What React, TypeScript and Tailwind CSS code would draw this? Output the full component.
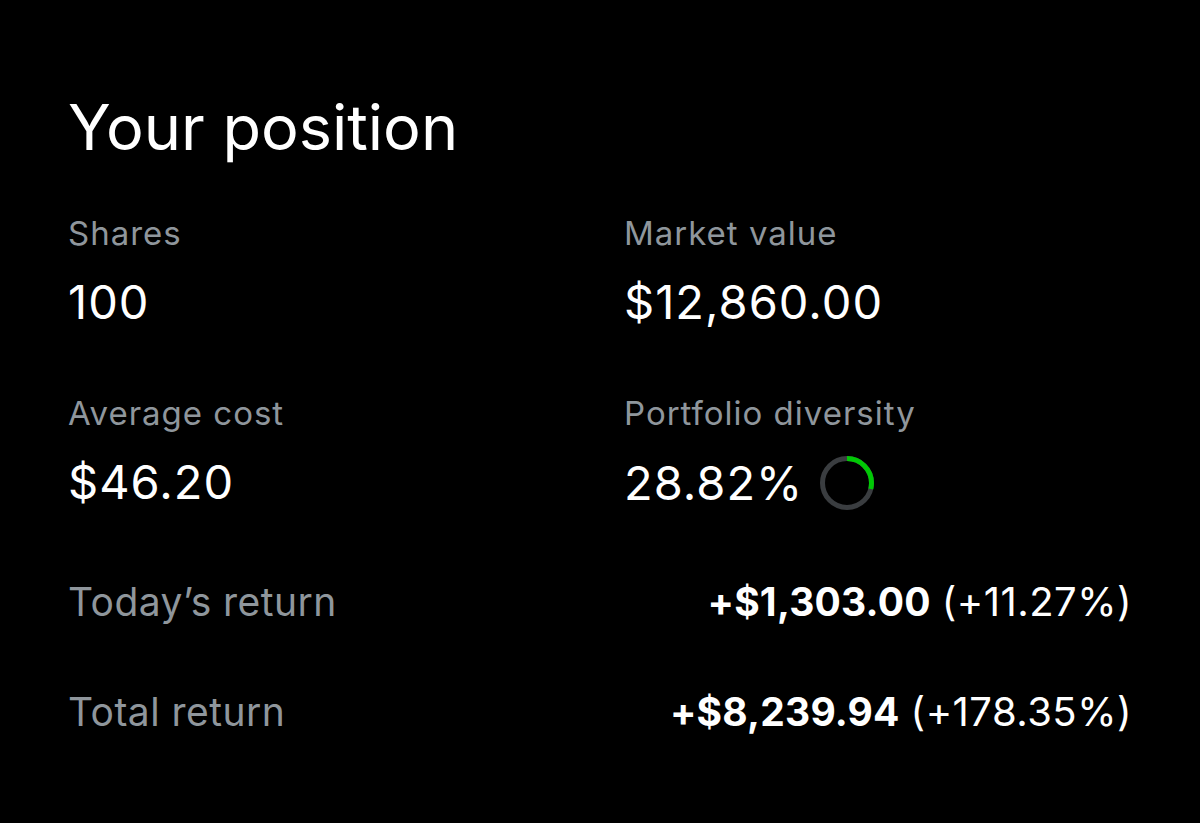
import React from "react";

const r = 24.5;
const c = 2 * Math.PI * r;

function DiversityRing({ pct }: { pct: number }) {
  return (
    <svg width="56" height="56" viewBox="0 0 56 56" className="ml-[16px] mt-[0px]">
      <circle cx="28" cy="28" r={r} fill="none" stroke="#3a3d40" strokeWidth="5" />
      <circle
        cx="28"
        cy="28"
        r={r}
        fill="none"
        stroke="#00c805"
        strokeWidth="5"
        strokeDasharray={`${(c * pct) / 100} ${c}`}
        transform="rotate(-90 28 28)"
      />
    </svg>
  );
}

function Stat({ label, children }: { label: string; children: React.ReactNode }) {
  return (
    <div className="flex flex-col">
      <div className="text-[33px] leading-[40px] tracking-[0.03em] text-[#8f969c]">{label}</div>
      <div className="mt-[22px] flex items-center text-[47px] leading-[54px] tracking-[0.022em] text-white">
        {children}
      </div>
    </div>
  );
}

function ReturnRow({ label, amount, pct }: { label: string; amount: string; pct: string }) {
  return (
    <div className="flex items-center justify-between h-[110px]">
      <span className="text-[39px] tracking-[0.012em] text-[#8f969c]">{label}</span>
      <span className="text-[39px] text-white">
        <span className="font-bold tracking-[0.005em]">{amount}</span>{" "}
        <span className="text-[40px] tracking-[0.012em]">{pct}</span>
      </span>
    </div>
  );
}

export default function App() {
  return (
    <div
      className="w-[1200px] h-[823px] bg-black pl-[68px] pr-[68px] pt-[89px]"
      style={{ fontFamily: "Inter, 'Liberation Sans', sans-serif" }}
    >
      <h1 className="text-[63px] leading-[76px] text-white font-normal">Your position</h1>
      <div className="grid grid-cols-[556px_1fr] gap-y-[64px] mt-[48px]">
        <Stat label="Shares">100</Stat>
        <Stat label="Market value">$12,860.00</Stat>
        <Stat label="Average cost">$46.20</Stat>
        <Stat label="Portfolio diversity">
          28.82%
          <DiversityRing pct={28.82} />
        </Stat>
      </div>
      <div className="mt-[36px]">
        <ReturnRow label="Today’s return" amount="+$1,303.00" pct="(+11.27%)" />
        <ReturnRow label="Total return" amount="+$8,239.94" pct="(+178.35%)" />
      </div>
    </div>
  );
}
